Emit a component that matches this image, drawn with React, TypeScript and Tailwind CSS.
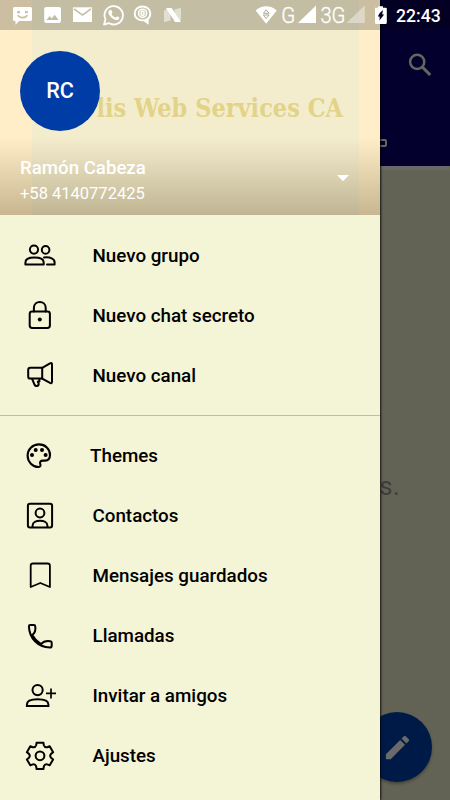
import React from "react";

interface MenuItem {
  label: string;
  icon: React.ReactNode;
  tight?: boolean;
}

// six-toothed cog outline, valleys rounded with a quadratic curve
const gearPath = (() => {
  const at = (deg: number, r: number) => {
    const a = (deg * Math.PI) / 180;
    return `${(20 + r * Math.cos(a)).toFixed(2)} ${(19.8 + r * Math.sin(a)).toFixed(2)}`;
  };
  let d = "";
  for (let i = 0; i < 6; i++) {
    const mid = i * 60 - 90;
    d += `${i === 0 ? "M" : "L"}${at(mid - 14.5, 13.6)}L${at(mid + 14.5, 13.6)}`;
    d += `L${at(mid + 20, 11.2)}Q${at(mid + 30, 9.4)} ${at(mid + 40, 11.2)}`;
  }
  return `${d}Z`;
})();

const Glyph: React.FC<{ children: React.ReactNode }> = ({ children }) => (
  <svg
    viewBox="0 0 40 40"
    className="size-10 shrink-0 fill-none stroke-black"
    strokeWidth="2"
    strokeLinecap="round"
    strokeLinejoin="round"
  >
    {children}
  </svg>
);

const PRIMARY: MenuItem[] = [
  {
    label: "Nuevo grupo",
    icon: (
      <Glyph>
        <circle cx="14" cy="14.6" r="4.1" />
        <circle cx="25.6" cy="14.9" r="3.8" />
        <path d="M5.4 29.4V27.4C5.4 24.4 9 22.6 14.4 22.6S23.7 24.4 23.7 27.4V29.4Z" />
        <path d="M24 22.5C30.5 21.8 34.6 23.8 34.6 27.2V29.4H27" />
      </Glyph>
    ),
  },
  {
    label: "Nuevo chat secreto",
    icon: (
      <Glyph>
        <rect x="9.7" y="16.6" width="20.2" height="16.4" rx="2.4" />
        <path d="M13.9 16.4V12.8C13.9 5 25.7 5 25.7 12.8V16.4" />
        <circle cx="19.8" cy="24.5" r="2" className="fill-black stroke-none" />
      </Glyph>
    ),
  },
  {
    label: "Nuevo canal",
    icon: (
      <Glyph>
        <path d="M22.2 12.8H10.4Q8.2 12.8 8.2 15V21.4Q8.2 23.6 10.4 23.6H22.2Z" />
        <path d="M22.2 12.8L30 8.3Q32 7.4 32 9.4V26.8Q32 28.8 30 27.9L22.2 23.6" />
        <path d="M12.2 24L14.6 29.8Q15.4 31.4 17 31Q19 30.4 18.6 28.4L17.8 26.6H19.4V24" />
      </Glyph>
    ),
  },
];

const SECONDARY: MenuItem[] = [
  {
    label: "Themes",
    tight: true,
    icon: (
      <Glyph>
        <path
          strokeWidth="2.1"
          d="M19 8.4C12.4 8.4 7.6 13.4 7.6 19.6C7.6 26 12.6 31 18.6 31C20.4 31 20.8 29.6 20.3 28.2C19.4 26 20.6 24.6 22.8 24.6H25C28.4 24.6 30 22.4 30 18.8C30 13 25.2 8.4 19 8.4Z"
        />
        <g className="fill-black stroke-none">
          <circle cx="12" cy="19" r="2" />
          <circle cx="15.7" cy="14.1" r="2" />
          <circle cx="22" cy="14.1" r="2" />
          <circle cx="25.6" cy="19" r="2" />
        </g>
      </Glyph>
    ),
  },
  {
    label: "Contactos",
    icon: (
      <Glyph>
        <rect x="7.9" y="7.7" width="24.2" height="23.9" rx="2" />
        <circle cx="20" cy="17" r="4.4" />
        <path d="M12.6 31V29.4C12.6 23.2 27.4 23.2 27.4 29.4V31" />
      </Glyph>
    ),
  },
  {
    label: "Mensajes guardados",
    icon: (
      <Glyph>
        <path strokeWidth="1.8" d="M10.7 31V9.8Q10.7 7.5 13 7.5H27.6Q29.9 7.5 29.9 9.8V31L20.3 27Z" />
      </Glyph>
    ),
  },
  {
    label: "Llamadas",
    icon: (
      <Glyph>
        <path d="M10.2 9H13.8Q15.2 9 15.3 10.4C15.8 14.2 15 17 12.3 19C14.3 22.8 17.4 26 21 28.2C23.4 25.4 26.6 24.6 30.4 25.3Q31.7 25.5 31.7 26.8V29.8Q31.7 31.6 30 31.6C17.6 31 9.4 22.4 8.9 10.4Q8.9 9 10.2 9Z" />
      </Glyph>
    ),
  },
  {
    label: "Invitar a amigos",
    icon: (
      <Glyph>
        <circle cx="17.6" cy="14.1" r="5.1" />
        <path strokeLinejoin="miter" d="M6.9 30V28.4C6.9 25.2 11 23.2 17.6 23.2S28.4 25.2 28.4 28.4V30Z" />
        <path strokeWidth="1.7" strokeLinecap="butt" d="M26 17.4H36M31 12.4V22.4" />
      </Glyph>
    ),
  },
  {
    label: "Ajustes",
    icon: (
      <Glyph>
        <path d={gearPath} />
        <circle cx="20" cy="19.8" r="4.4" />
      </Glyph>
    ),
  },
];

const MenuRow: React.FC<{ item: MenuItem }> = ({ item }) => (
  <li className="flex h-[60px] items-center pl-5">
    {item.icon}
    <span
      className={`text-[18.8px] leading-6 font-medium whitespace-nowrap text-black ${
        item.tight ? "ml-[30px]" : "ml-[32.5px]"
      }`}
    >
      {item.label}
    </span>
  </li>
);

const StatusBar = () => (
  <div className="absolute inset-x-0 top-0 z-20 flex h-[30px] bg-black/20 text-white">
    <svg viewBox="0 0 380 30" className="h-[30px] w-[380px] shrink-0 fill-white">
      {/* message */}
      <path
        fillRule="evenodd"
        d="M14.5 7H30.5Q32 7 32 8.5V19.5Q32 21 30.5 21H19L15.5 24.8V21H14.5Q13 21 13 19.5V8.5Q13 7 14.5 7ZM17.2 11V13.2H20V11ZM25 11V13.2H27.8V11ZM17.2 15.2C19 19.6 26.4 19.6 28 15.2L26.8 14.8C25 17.4 20 17.4 18.4 14.8Z"
      />
      {/* picture */}
      <path
        fillRule="evenodd"
        d="M46.2 7H59Q61 7 61 9V21Q61 23 59 23H46.2Q44.2 23 44.2 21V9Q44.2 7 46.2 7ZM46.5 20H58.5L54.7 14.8L51.7 18.5L49.6 16Z"
      />
      {/* mail */}
      <path d="M73 7.3H92V22H73Z" />
      <path d="M74 8.8L82.5 15L91 8.8" className="fill-none stroke-[#c0bba0]" strokeWidth="1.5" />
      {/* whatsapp */}
      <path
        d="M104 24.6L105.5 19.4A9.2 9.2 0 1 1 108.9 23.1Z"
        className="fill-none stroke-white"
        strokeWidth="1.8"
        strokeLinejoin="round"
      />
      <path d="M109.3 10.4Q110.4 9.4 111.4 10.2L112.5 12.6L111.5 14.2Q112.8 16.8 115.5 17.7L117 16.2L119.2 17.3Q119.8 18.8 118.1 19.8C114.8 21.4 108.1 15.7 108.4 12.2Q108.5 11.2 109.3 10.4Z" />
      {/* speech bubble */}
      <path
        d="M142.5 6.5C147 6.5 150.3 9.6 150.3 13.5C150.3 16.2 149.2 17.9 147.7 19.1V22.8L144 20.2C138.6 21 134.7 17.8 134.7 13.5C134.7 9.6 138 6.5 142.5 6.5Z"
        className="fill-none stroke-white"
        strokeWidth="1.9"
      />
      <path d="M144 20L147.7 17.5V22.8Z" />
      <circle cx="142.6" cy="13.3" r="4.2" className="fill-white/40 stroke-white" strokeWidth="1.3" />
      <ellipse cx="142.6" cy="13.3" rx="1.4" ry="2.2" className="fill-none stroke-white" strokeWidth="1.2" />
      {/* android N */}
      <path d="M164 10.4L170.5 8.2V20.6L164 22.3ZM174.5 9.5L181 7.7V20.2L174.5 21.9Z" opacity=".5" />
      <path d="M165.8 8H171.6L181 22H175.2Z" />
      {/* wifi */}
      <path d="M255.6 10.6C261.5 4.8 270.8 4.8 276.8 10.6L266.2 23.8Z" />
      <path
        d="M266.2 9.8L269 13.3H263.4ZM266.2 18.6L269 15H263.4Z"
        className="fill-none stroke-[#b0ab90]"
        strokeWidth="1"
      />
      {/* mobile networks */}
      <path d="M316 5.5V23H298Z" />
      <path d="M364.8 5.5V23H346.5Z" opacity=".4" />
      <g className="font-[Roboto,sans-serif] font-light stroke-white" strokeWidth=".4" fontSize="22.5">
        <text x="281.2" y="23.2" textLength="14" lengthAdjust="spacingAndGlyphs">
          G
        </text>
        <text x="320.4" y="23.2" textLength="25" lengthAdjust="spacingAndGlyphs">
          3G
        </text>
      </g>
      <path d="M375 7.8H378V6.2H380V24H376.5Q375 24 375 22.5Z" />
      <path d="M380 12.4L377.8 16.4H379.6V20.8L380 20Z" className="fill-[#020020]" />
    </svg>
    <svg viewBox="0 0 16 30" className="h-[30px] w-4 shrink-0 fill-white">
      <path d="M0 6.2H3V7.8H5.8Q6.8 7.8 6.8 8.8V22.5Q6.8 24 5.5 24H0Z" />
      <path d="M3 10L0 12.8V19.8L4.2 14.4H2.2Z" className="fill-[#020020]" />
    </svg>
    <time className="text-[17.6px] leading-[32px] font-medium">22:43</time>
  </div>
);

const ChatsPage = () => (
  <div className="flex h-full flex-col bg-[#626255]">
    <header className="h-[166px] bg-[#04002e]">
      <div className="flex h-[99px] items-end justify-end border-b border-[#03002a] pr-4 pb-[19px]">
        <svg viewBox="0 0 28 30" className="h-[30px] w-7 fill-none stroke-[#66655f]" strokeWidth="2.5">
          <circle cx="11.2" cy="12.8" r="7.1" />
          <path d="M16.2 17.9L24.2 26" strokeWidth="3" />
        </svg>
      </div>
      <div className="flex pt-10 pl-[374px]">
        <div className="h-2 w-[13px] rounded-[2px] border-2 border-[#66655f]" />
      </div>
    </header>
    <div className="mr-px h-1 bg-[#696965]" />
    <p className="pt-[301px] pl-[379.5px] text-[25px] leading-[32px] tracking-[0.5px] text-[#3d3d3b]">s.</p>
    <div className="mt-auto mb-[18px] ml-[362px] flex size-[70px] items-center justify-center rounded-full bg-[#001a48] shadow-[0_2px_3px_rgba(0,0,0,0.3)]">
      <svg viewBox="0 0 24 24" className="size-[31px] fill-[#6a6a6c]">
        <path d="M3 17.25V21h3.75L17.81 9.94l-3.75-3.75L3 17.25zM20.71 7.04a1 1 0 0 0 0-1.41l-2.34-2.34a1 1 0 0 0-1.41 0l-1.83 1.83 3.75 3.75 1.83-1.83z" />
      </svg>
    </div>
  </div>
);

const DrawerHeader = () => (
  <div className="relative flex h-[215px] flex-col overflow-hidden bg-[#ffeec8] pt-[51px] pl-5 text-white">
    {/* cover artwork behind the account details */}
    <div className="absolute inset-y-0 left-8 w-[327px] bg-[#f4edcd]" />
    <svg viewBox="0 0 380 50" className="absolute top-[80px] left-0 h-[50px] w-[380px] fill-[#e2d388]">
      <text
        x="96.5"
        y="37"
        fontSize="25.5"
        textLength="246.5"
        lengthAdjust="spacingAndGlyphs"
        className="font-['DejaVu_Serif_Condensed','DejaVu_Serif',serif] font-bold"
      >
        lis Web Services CA
      </text>
    </svg>
    <div className="absolute inset-x-0 bottom-0 h-[78px] bg-linear-to-b from-[#3c280000] to-[#3c280048]" />
    <div className="relative flex size-20 items-center justify-center rounded-full bg-[#003ca5] text-[21.6px] font-medium">
      RC
    </div>
    <div className="relative mt-[25px] flex items-center">
      <div className="flex-1">
        <p className="text-[18.67px] leading-6 font-medium">Ramón Cabeza</p>
        <p className="mt-0.5 text-[16.5px] leading-6">+58 4140772425</p>
      </div>
      <svg viewBox="0 0 14 8" className="mr-[30px] mb-[7px] h-2 w-3.5 fill-white">
        <path d="M1 1H13L7 7.2Z" />
      </svg>
    </div>
  </div>
);

export default function App() {
  return (
    <div className="relative h-[800px] w-[450px] overflow-hidden font-[Roboto,sans-serif]">
      <ChatsPage />
      <aside className="absolute inset-y-0 left-0 z-10 w-[380px] bg-[#f4f4d7] shadow-[1px_0_2px_rgba(0,0,0,0.8)]">
        <DrawerHeader />
        <ul className="py-[10px] [&_span]:pt-0.5">
          {PRIMARY.map((item) => (
            <MenuRow key={item.label} item={item} />
          ))}
        </ul>
        <hr className="border-t border-[#bebea8]" />
        <ul className="py-[10px]">
          {SECONDARY.map((item) => (
            <MenuRow key={item.label} item={item} />
          ))}
        </ul>
      </aside>
      <StatusBar />
    </div>
  );
}
